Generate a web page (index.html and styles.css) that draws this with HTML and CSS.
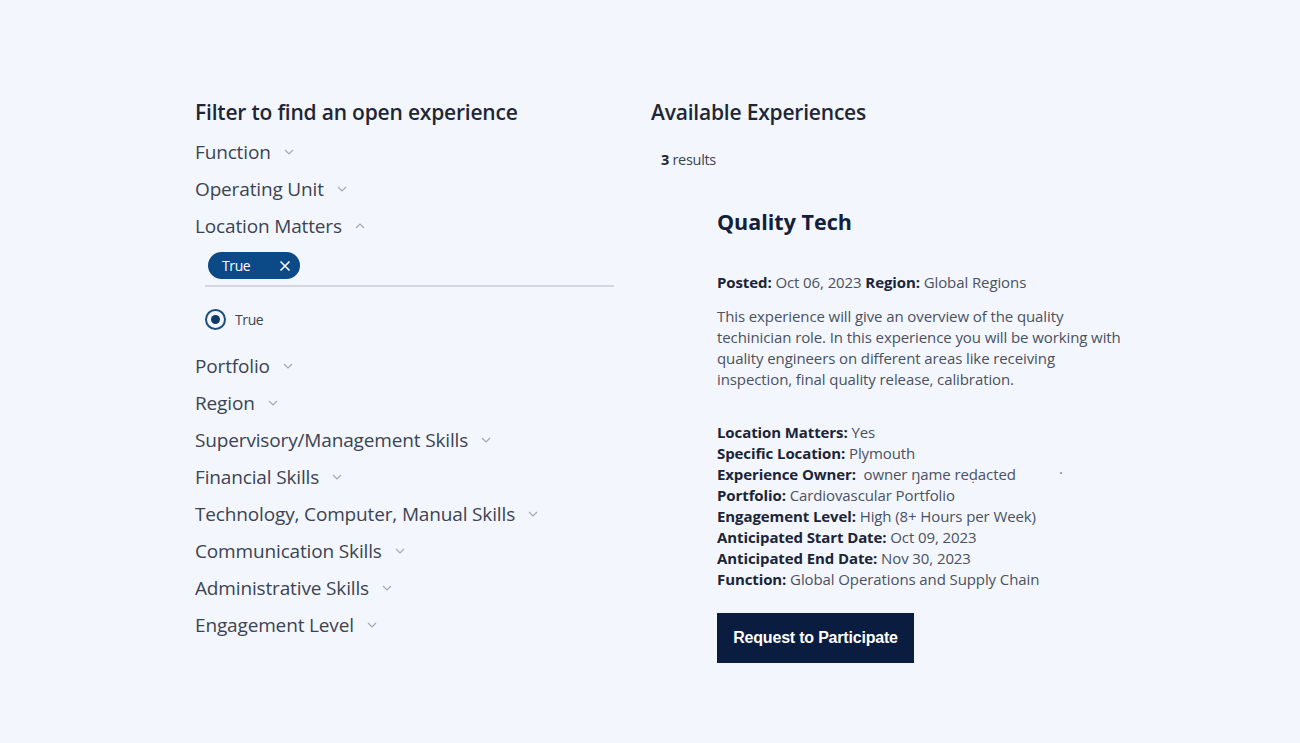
FILE: index.html
```html
<!DOCTYPE html>
<html lang="en">
<head>
<meta charset="utf-8">
<title>Experiences</title>
<link rel="stylesheet" href="styles.css">
</head>
<body>
<main class="page">
  <section class="filters">
    <h2 class="heading">Filter to find an open experience</h2>
    <ul class="filter-list">
      <li class="filter"><span>Function</span><svg class="chev" viewBox="0 0 10 6"><path d="M1 1l4 4 4-4"/></svg></li>
      <li class="filter"><span>Operating Unit</span><svg class="chev" viewBox="0 0 10 6"><path d="M1 1l4 4 4-4"/></svg></li>
      <li class="filter"><span>Location Matters</span><svg class="chev" viewBox="0 0 10 6"><path d="M1 5l4-4 4 4"/></svg></li>
    </ul>
    <div class="open-panel">
      <div class="chips">
        <span class="chip">True<svg class="chip-x" viewBox="0 0 12 12"><path d="M1.5 1.5l9 9M10.5 1.5l-9 9"/></svg></span>
      </div>
      <label class="radio-row"><span class="radio"><span class="radio-dot"></span></span><span>True</span></label>
    </div>
    <ul class="filter-list">
      <li class="filter"><span>Portfolio</span><svg class="chev" viewBox="0 0 10 6"><path d="M1 1l4 4 4-4"/></svg></li>
      <li class="filter"><span>Region</span><svg class="chev" viewBox="0 0 10 6"><path d="M1 1l4 4 4-4"/></svg></li>
      <li class="filter"><span>Supervisory/Management Skills</span><svg class="chev" viewBox="0 0 10 6"><path d="M1 1l4 4 4-4"/></svg></li>
      <li class="filter"><span>Financial Skills</span><svg class="chev" viewBox="0 0 10 6"><path d="M1 1l4 4 4-4"/></svg></li>
      <li class="filter"><span>Technology, Computer, Manual Skills</span><svg class="chev" viewBox="0 0 10 6"><path d="M1 1l4 4 4-4"/></svg></li>
      <li class="filter"><span>Communication Skills</span><svg class="chev" viewBox="0 0 10 6"><path d="M1 1l4 4 4-4"/></svg></li>
      <li class="filter"><span>Administrative Skills</span><svg class="chev" viewBox="0 0 10 6"><path d="M1 1l4 4 4-4"/></svg></li>
      <li class="filter"><span>Engagement Level</span><svg class="chev" viewBox="0 0 10 6"><path d="M1 1l4 4 4-4"/></svg></li>
    </ul>
  </section>
  <section class="results">
    <h2 class="heading">Available Experiences</h2>
    <p class="count"><b>3</b> results</p>
    <article class="card">
      <h3 class="card-title">Quality Tech</h3>
      <p class="meta"><b>Posted:</b> Oct 06, 2023 <b>Region:</b> Global Regions</p>
      <p class="desc">This experience will give an overview of the quality techinician role. In this experience you will be working with quality engineers on different areas like receiving inspection, final quality release, calibration.</p>
      <div class="details">
        <div><b>Location Matters:</b> Yes</div>
        <div><b>Specific Location:</b> Plymouth</div>
        <div><b>Experience Owner:</b>&nbsp; owner ŋame reḍacted<span class="speck"></span></div>
        <div><b>Portfolio:</b> Cardiovascular Portfolio</div>
        <div><b>Engagement Level:</b> High (8+ Hours per Week)</div>
        <div><b>Anticipated Start Date:</b> Oct 09, 2023</div>
        <div><b>Anticipated End Date:</b> Nov 30, 2023</div>
        <div><b>Function:</b> Global Operations and Supply Chain</div>
      </div>
      <button class="btn" type="button">Request to Participate</button>
    </article>
  </section>
</main>
</body>
</html>
```
FILE: styles.css
```css
html, body {
  margin: 0;
  padding: 0;
  background: #f3f7fd;
}
body {
  font-family: "Open Sans", "Noto Sans", sans-serif;
  color: #3c4353;
  width: 1300px;
  height: 743px;
  overflow: hidden;
}
.page {
  display: flex;
  padding: 98px 0 0 195px;
  gap: 36px;
}
.filters {
  width: 420px;
}
.results {
  width: 480px;
}
.heading {
  margin: 0;
  font-size: 21px;
  line-height: 28px;
  font-weight: 600;
  color: #1f2636;
  letter-spacing: -0.2px;
}
.filter-list {
  list-style: none;
  margin: 0;
  padding: 0;
}
.filters > .filter-list:first-of-type {
  margin-top: 7px;
}
.filter {
  display: flex;
  align-items: center;
  gap: 13px;
  height: 37px;
  font-size: 19px;
  color: #3c4353;
  letter-spacing: -0.15px;
}
.chev {
  width: 10px;
  height: 6px;
  fill: none;
  stroke: #a3a9b4;
  stroke-width: 1.2;
}
.open-panel {
  padding-left: 10px;
  padding-top: 8px;
  padding-bottom: 17px;
}
.chips {
  border-bottom: 2px solid #d3d8e0;
  padding: 0 0 6px 3px;
  margin-right: 1px;
}
.chip {
  display: inline-flex;
  align-items: center;
  justify-content: space-between;
  box-sizing: border-box;
  width: 92px;
  height: 27px;
  padding: 0 9px 0 14px;
  border-radius: 14px;
  background: #0b4a87;
  color: #fff;
  font-size: 14px;
  letter-spacing: -0.4px;
}
.chip-x {
  width: 12px;
  height: 12px;
  fill: none;
  stroke: #fff;
  stroke-width: 1.6;
}
.radio-row {
  display: flex;
  align-items: center;
  gap: 9px;
  margin-top: 22px;
  font-size: 14px;
  color: #3c4353;
  letter-spacing: -0.4px;
}
.radio {
  box-sizing: border-box;
  width: 21px;
  height: 21px;
  border: 2px solid #1f4c7f;
  border-radius: 50%;
  display: flex;
  align-items: center;
  justify-content: center;
}
.radio-dot {
  width: 9px;
  height: 9px;
  border-radius: 50%;
  background: #0d3a6a;
}
.count {
  margin: 24px 0 0 10px;
  font-size: 14.5px;
  line-height: 20px;
  color: #3c4353;
  letter-spacing: -0.3px;
}
.count b {
  color: #1f2636;
}
.card {
  margin-left: 66px;
  margin-top: 37px;
}
.card-title {
  margin: 0;
  font-size: 21.5px;
  line-height: 30px;
  font-weight: 700;
  color: #13203b;
}
.meta {
  margin: 35px 0 0;
  font-size: 15px;
  line-height: 20px;
  color: #4a5161;
  letter-spacing: -0.1px;
}
.meta b, .details b {
  color: #1b2438;
}
.desc {
  margin: 14px 0 0;
  font-size: 15px;
  line-height: 21px;
  color: #4a5161;
  letter-spacing: -0.1px;
  width: 410px;
}
.details {
  margin-top: 32px;
  font-size: 15px;
  line-height: 21px;
  color: #4a5161;
  letter-spacing: -0.1px;
}
.speck {
  display: inline-block;
  width: 2px;
  height: 2px;
  background: #9aa0aa;
  margin-left: 44px;
  vertical-align: 6px;
}
.btn {
  margin-top: 23px;
  width: 197px;
  height: 50px;
  border: 0;
  border-radius: 0;
  background: #0a1d40;
  color: #fff;
  font-family: "Liberation Sans", Arial, sans-serif;
  font-weight: 700;
  font-size: 16px;
  letter-spacing: -0.2px;
  cursor: pointer;
}
```
